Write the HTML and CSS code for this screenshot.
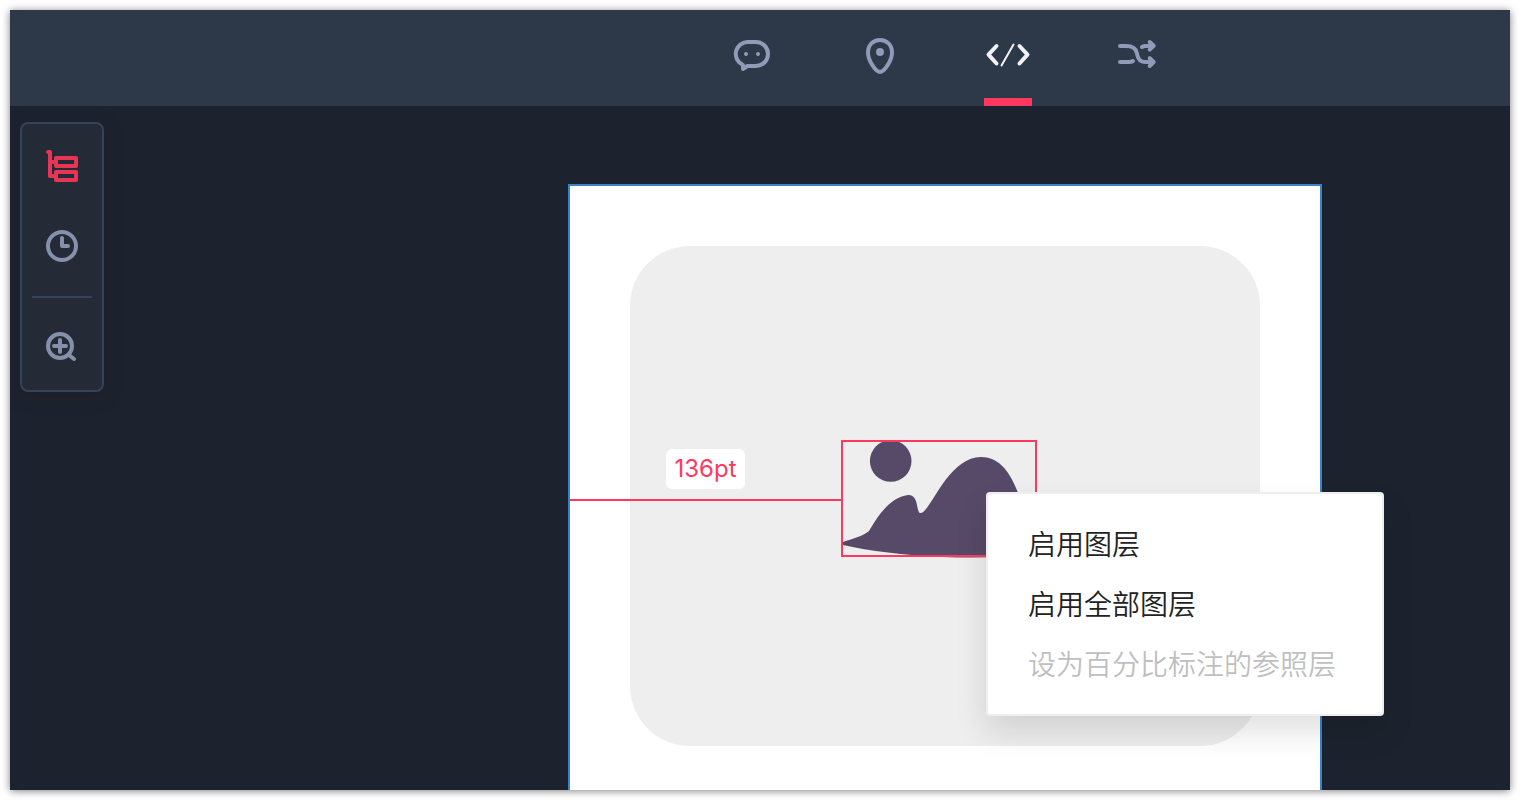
FILE: index.html
```html
<!DOCTYPE html>
<html lang="zh-CN">
<head>
    <meta charset="UTF-8">
    <meta name="viewport" content="width=device-width, initial-scale=1.0">
    <title>标注</title>
    <link rel="stylesheet" href="styles.css">
</head>
<body>

    <div class="app">
        <header class="topbar">
            <nav class="modes">
                <button class="mode" type="button" aria-label="评论">
                    <svg width="48" height="48" viewBox="0 0 48 48">
                        <path d="M20 10h8a12 12 0 0 1 0 24H19.500L15 37V33A12 12 0 0 1 20 10z" />
                        <circle class="dot" cx="18" cy="22" r="2" />
                        <circle class="dot" cx="30" cy="22" r="2" />
                    </svg>
                </button>
                <button class="mode" type="button" aria-label="定位">
                    <svg width="48" height="48" viewBox="0 0 48 48">
                        <path d="M24 8c-6.800 0-12 5-12 12.500C12 29 20 40 24 40s12-11 12-19.500C36 13 30.800 8 24 8z" />
                        <circle class="dot" cx="24" cy="20" r="4" />
                    </svg>
                </button>
                <button class="mode active" type="button" aria-label="代码">
                    <svg width="48" height="48" viewBox="0 0 48 48">
                        <path d="M12.500 14L4.500 22.700L12.500 31.500" />
                        <path d="M35.500 14L43.500 22.700L35.500 31.500" />
                        <path class="thin" d="M29.500 12.500L17.500 33.500" />
                    </svg>
                </button>
                <button class="mode" type="button" aria-label="流程">
                    <svg width="48" height="48" viewBox="0 0 48 48">
                        <path d="M8 14H14C21 14 24 16.500 24.800 21C26 27 27.500 30 34 30H40" />
                        <path d="M8 30H17Q19.500 30 21 29" />
                        <path d="M30 15Q31 14 33 14H40" />
                        <path d="M37.700 10L41.700 13.800L37.700 17.600" />
                        <path d="M37.700 26.200L41.700 30L37.700 34" />
                    </svg>
                </button>
            </nav>
        </header>

        <main class="canvas">
            <aside class="tools">
                <button class="tool active" type="button" aria-label="图层">
                    <svg width="40" height="40" viewBox="0 0 40 40">
                        <path d="M6 6H8V30H14M8 16H14" />
                        <rect x="14" y="12" width="20" height="8" />
                        <rect x="14" y="26" width="20" height="8" />
                    </svg>
                </button>
                <button class="tool" type="button" aria-label="历史">
                    <svg width="40" height="40" viewBox="0 0 40 40">
                        <circle cx="20" cy="20" r="14" />
                        <path d="M20 12V20H26" />
                    </svg>
                </button>
                <hr class="divider">
                <button class="tool" type="button" aria-label="放大">
                    <svg width="40" height="40" viewBox="0 0 40 40">
                        <circle cx="18" cy="20" r="12" />
                        <path d="M18 14V26M12 20H24M27 29L32 33" />
                    </svg>
                </button>
            </aside>

            <div class="artboard">
                <div class="placeholder"></div>

                <div class="distance">
                    <span class="distance-label">136pt</span>
                    <div class="distance-line"></div>
                </div>

                <div class="selection">
                    <svg width="192" height="116" viewBox="0 0 192 116">
                        <circle cx="47.700" cy="19" r="20.800" />
                        <path d="M0 100C9 97 20 94 26 89C34 75 47 55 65 53C76 52 73 70 77 71C87 73 104 15 138 15C162 15 172 41 179 62L192 90V112Q150 117 100 115Q40 112 0 103z" />
                    </svg>
                </div>
            </div>

            <div class="context-menu">
                <button class="menu-item" type="button">启用图层</button>
                <button class="menu-item" type="button">启用全部图层</button>
                <button class="menu-item" type="button" disabled>设为百分比标注的参照层</button>
            </div>
        </main>
    </div>

</body>
</html>
```

FILE: styles.css
```css
* {
    box-sizing: border-box;
}

body {
    margin: 0;
    padding: 10px;
    height: 100vh;
    background-color: white;
    font-family: Inter, "Noto Sans CJK SC", sans-serif;
}

button {
    margin: 0;
    padding: 0;
    border: none;
    background: none;
    font-family: inherit;
    cursor: pointer;
}

svg {
    display: block;
}

.app {
    display: flex;
    flex-direction: column;
    height: 100%;
    background-color: #1d232e;
    box-shadow: 0 1px 8px rgba(0, 0, 0, 0.5);
}

/* Top bar */
.topbar {
    height: 96px;
    padding-left: 718px;
    background-color: #2d3848;
}

.modes {
    display: flex;
    gap: 80px;
    height: 100%;
}

.mode {
    display: flex;
    flex-shrink: 0;
    width: 48px;
    padding-top: 22px;
    border-bottom: 8px solid transparent;
}

.mode.active {
    border-bottom-color: #ff3860;
}

.mode svg {
    fill: none;
    stroke: #8f9bb7;
    stroke-width: 4;
    stroke-linecap: round;
    stroke-linejoin: round;
}

.mode .dot {
    fill: #8f9bb7;
    stroke: none;
}

.mode.active svg {
    stroke: #f0f1f4;
}

.mode .thin {
    stroke-width: 2;
}

/* Canvas */
.canvas {
    position: relative;
    flex: 1;
    overflow: hidden;
    padding: 16px 10px;
}

.tools {
    display: flex;
    flex-direction: column;
    align-items: center;
    width: 84px;
    padding: 22px 10px 24px;
    gap: 40px;
    border: 2px solid #364259;
    border-radius: 8px;
    background-color: #242a36;
    box-shadow: 0 4px 16px rgba(29, 26, 37, 0.5);
}

.tool svg {
    fill: none;
    stroke: #8590aa;
    stroke-width: 4;
    stroke-linecap: round;
    stroke-linejoin: round;
}

.tool.active svg {
    stroke: #e83555;
}

.divider {
    width: 100%;
    margin: -10px 0 -12px;
    border: none;
    border-top: 2px solid #364259;
}

.artboard {
    position: absolute;
    top: 78px;
    left: 558px;
    width: 754px;
    height: 800px;
    padding: 60px;
    border: 2px solid #3b82cb;
    background-color: white;
}

.placeholder {
    width: 100%;
    height: 500px;
    border-radius: 60px;
    background-color: #eeeeee;
}

/* Distance from the artboard edge to the selected layer */
.distance {
    position: absolute;
    top: 263px;
    left: 0;
    display: flex;
    flex-direction: column;
    align-items: center;
    gap: 10px;
    width: 271px;
}

.distance-label {
    padding: 0 8px;
    border-radius: 6px;
    background-color: white;
    color: #ff3860;
    font-size: 24px;
    line-height: 40px;
}

.distance-line {
    width: 100%;
    height: 2px;
    background-color: #ff3860;
}

.selection {
    position: absolute;
    top: 254px;
    left: 271px;
    width: 196px;
    height: 117px;
    border: 2px solid #ff3860;
}

.selection svg {
    fill: #574a68;
}

/* Keep the frame above the picture */
.selection::after {
    content: "";
    position: absolute;
    inset: -2px;
    border: 2px solid #ff3860;
}

.context-menu {
    position: absolute;
    top: 386px;
    left: 976px;
    display: flex;
    flex-direction: column;
    width: 398px;
    padding: 21px 40px 19px;
    border: 2px solid #eeeeee;
    border-radius: 4px;
    background-color: white;
    box-shadow: 0 16px 32px rgba(0, 0, 0, 0.12);
}

.menu-item {
    color: #222222;
    font-size: 28px;
    font-weight: 350;
    line-height: 60px;
    text-align: left;
    white-space: nowrap;
}

.menu-item:disabled {
    color: #bfbfbf;
    cursor: default;
}
```
